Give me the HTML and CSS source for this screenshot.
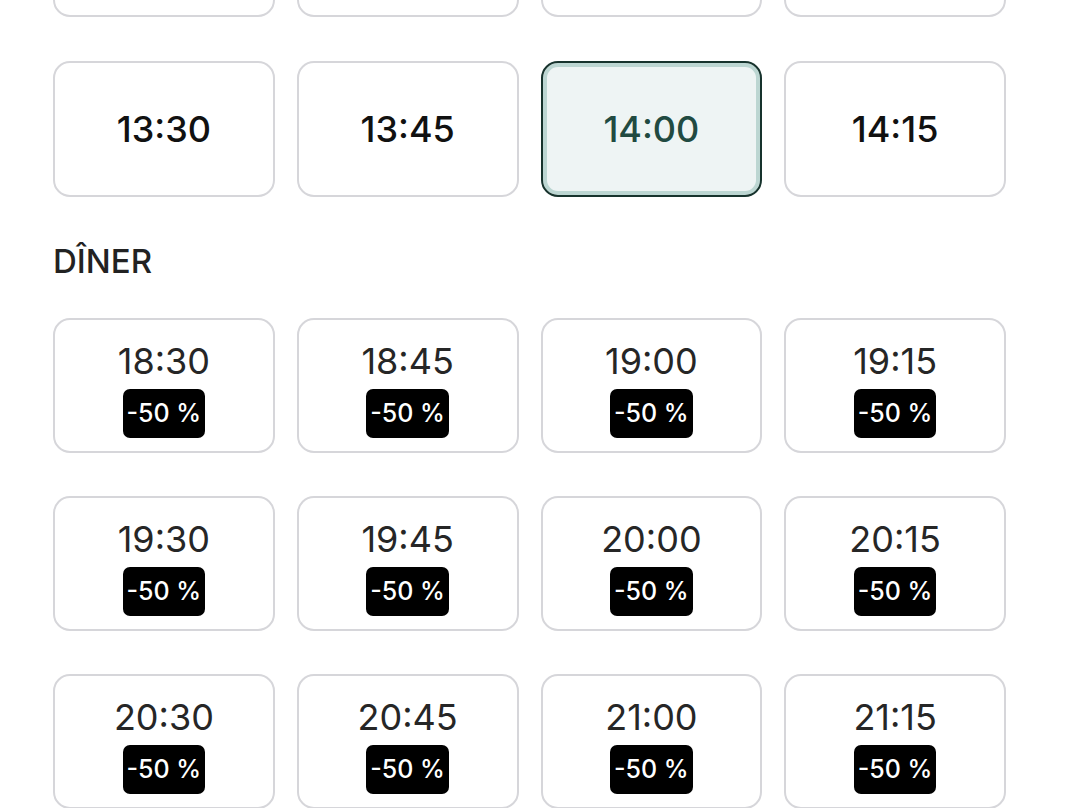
FILE: index.html
```html
<!DOCTYPE html>
<html lang="fr">
<head>
<meta charset="UTF-8">
<meta name="viewport" content="width=device-width, initial-scale=1.0">
<title>Réserver une table</title>
<link rel="stylesheet" href="styles.css">
</head>
<body>
<div class="container">
  <div class="slots slots-top">
    <button class="slot">12:30</button>
    <button class="slot">12:45</button>
    <button class="slot">13:00</button>
    <button class="slot">13:15</button>
    <button class="slot">13:30</button>
    <button class="slot">13:45</button>
    <button class="slot selected">14:00</button>
    <button class="slot">14:15</button>
  </div>

  <h2 class="service">DÎNER</h2>
  <div class="slots">
    <button class="slot offer"><span class="time">18:30</span><span class="badge">-50 %</span></button>
    <button class="slot offer"><span class="time">18:45</span><span class="badge">-50 %</span></button>
    <button class="slot offer"><span class="time">19:00</span><span class="badge">-50 %</span></button>
    <button class="slot offer"><span class="time">19:15</span><span class="badge">-50 %</span></button>
    <button class="slot offer"><span class="time">19:30</span><span class="badge">-50 %</span></button>
    <button class="slot offer"><span class="time">19:45</span><span class="badge">-50 %</span></button>
    <button class="slot offer"><span class="time">20:00</span><span class="badge">-50 %</span></button>
    <button class="slot offer"><span class="time">20:15</span><span class="badge">-50 %</span></button>
    <button class="slot offer"><span class="time">20:30</span><span class="badge">-50 %</span></button>
    <button class="slot offer"><span class="time">20:45</span><span class="badge">-50 %</span></button>
    <button class="slot offer"><span class="time">21:00</span><span class="badge">-50 %</span></button>
    <button class="slot offer"><span class="time">21:15</span><span class="badge">-50 %</span></button>
  </div>
</div>
</body>
</html>
```

FILE: styles.css
```css
body {
  margin: 0;
  padding: 0;
  background-color: #ffffff;
  font-family: Inter, "Open Sans", sans-serif;
  color: #161616;
  overflow: hidden;
}
.container {
  padding: 0 74px 0 53px;
}
.slots {
  display: grid;
  grid-template-columns: repeat(4, 1fr);
  column-gap: 22px;
  row-gap: 43px;
}
.slots-top {
  margin-top: -119px;
  row-gap: 44px;
}
.slot {
  height: 136px;
  box-sizing: border-box;
  border: 2px solid #d6d6da;
  border-radius: 17px;
  background-color: #ffffff;
  font-family: inherit;
  font-size: 36px;
  font-weight: 450;
  color: #111111;
  display: flex;
  flex-direction: column;
  align-items: center;
  justify-content: center;
  padding: 0;
  cursor: pointer;
}
.slot.selected {
  border-color: #17332d;
  background-color: #eef4f4;
  box-shadow: inset 0 0 0 4px #bcd6d2;
  color: #214a41;
}
.service {
  margin: 44px 0 37px;
  font-size: 33px;
  line-height: 40px;
  font-weight: 500;
  color: #222222;
}
.slot.offer {
  height: 135px;
  padding-top: 5px;
  color: #262626;
  font-weight: 400;
}
.time {
  line-height: 44px;
}
.badge {
  margin-top: 6px;
  padding: 0 4px;
  height: 49px;
  line-height: 49px;
  border-radius: 7px;
  background-color: #000000;
  color: #ffffff;
  font-size: 25px;
  font-weight: 500;
}
```
